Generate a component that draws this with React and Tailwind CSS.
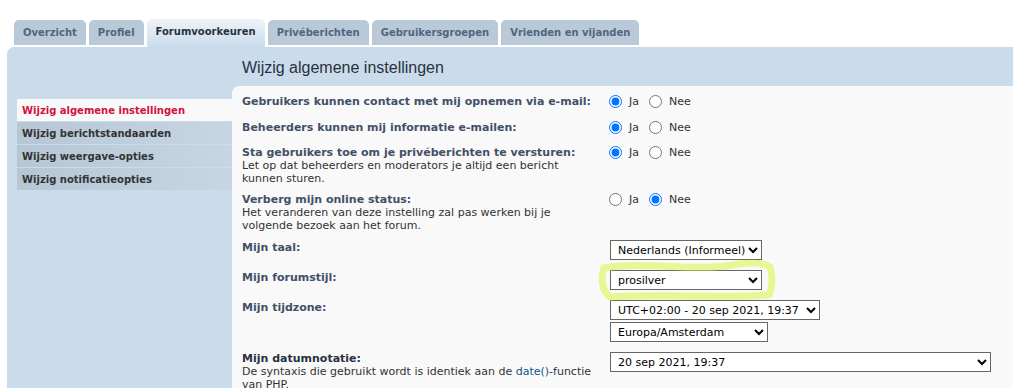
import React from "react";

const tabs = [
  { label: "Overzicht" },
  { label: "Profiel" },
  { label: "Forumvoorkeuren", active: true },
  { label: "Privéberichten" },
  { label: "Gebruikersgroepen" },
  { label: "Vrienden en vijanden" },
];

const menu = [
  { label: "Wijzig algemene instellingen", active: true },
  { label: "Wijzig berichtstandaarden" },
  { label: "Wijzig weergave-opties" },
  { label: "Wijzig notificatieopties" },
];

function Radios({ name, yes }) {
  return (
    <div className="flex items-center h-[13px]">
      <input type="radio" name={name} defaultChecked={yes} className="m-0 w-[13px] h-[13px]" />
      <span className="ml-[7px] text-[#333]">Ja</span>
      <input type="radio" name={name} defaultChecked={!yes} className="m-0 ml-[10px] w-[13px] h-[13px]" />
      <span className="ml-[7px] text-[#333]">Nee</span>
    </div>
  );
}

function Sel({ w, children }) {
  return (
    <select
      className={`${w} h-[20px] ml-[1px] border border-[#666] bg-white text-black pl-[3px] text-[11px] font-['DejaVu_Sans',sans-serif]`}
      defaultValue="a"
    >
      <option value="a">{children}</option>
    </select>
  );
}

export default function App() {
  return (
    <div className="relative w-[1013px] h-[388px] overflow-hidden bg-white font-['DejaVu_Sans',sans-serif] text-[11px] leading-[13px]">
      {/* Tabs */}
      <div className="h-[47px] flex items-end pl-[14px] gap-[3px]">
        {tabs.map((t) =>
          t.active ? (
            <div
              key={t.label}
              className="h-[28px] px-[9px] flex items-center rounded-t-[5px] bg-gradient-to-b from-[#eef4f9] to-[#cadceb] text-[#28313f] font-bold text-[10px] pb-[3px]"
            >
              {t.label}
            </div>
          ) : (
            <div
              key={t.label}
              className="h-[25px] mb-[2px] px-[9px] flex items-center rounded-t-[5px] bg-[#b9c9d7] text-[#536482] font-bold text-[10px]"
            >
              {t.label}
            </div>
          )
        )}
      </div>

      {/* Panel */}
      <div className="ml-[7px] h-[341px] bg-[#cadceb] rounded-tl-[7px] flex overflow-hidden">
        {/* Left menu */}
        <div className="w-[225px] shrink-0 pl-[10px] pt-[52px] flex flex-col gap-[1px]">
          {menu.map((m) =>
            m.active ? (
              <div key={m.label} className="w-[215px] h-[22px] px-[5px] flex items-center bg-[#f9f9f9] text-[#d31141] font-bold text-[10px]">
                {m.label}
              </div>
            ) : (
              <div
                key={m.label}
                className="w-[215px] h-[22px] px-[5px] flex items-center bg-gradient-to-r from-[#b6c6d5] to-[#c6d6e4] text-[#333] font-bold text-[10px]"
              >
                {m.label}
              </div>
            )
          )}
        </div>

        {/* Main */}
        <div className="flex-1 flex flex-col min-h-0">
          <div className="h-[39px] shrink-0 pl-[10px] pt-[12px] font-['Liberation_Sans',Arial,sans-serif] text-[16px] leading-[18px] text-[#28313f]">
            Wijzig algemene instellingen
          </div>
          <div className="flex-1 min-h-0 bg-[#f9f9f9] rounded-tl-[7px] pl-[10px] pt-[9px]">
            {/* Row 1 */}
            <div className="flex min-h-[18px] mb-[8px]">
              <div className="w-[367px] pr-[11px] shrink-0">
                <div className="font-bold text-[#425067]">Gebruikers kunnen contact met mij opnemen via e-mail:</div>
              </div>
              <Radios name="r1" yes />
            </div>
            {/* Row 2 */}
            <div className="flex min-h-[18px] mb-[7px]">
              <div className="w-[367px] pr-[11px] shrink-0">
                <div className="font-bold text-[#425067]">Beheerders kunnen mij informatie e-mailen:</div>
              </div>
              <Radios name="r2" yes />
            </div>
            {/* Row 3 */}
            <div className="flex min-h-[18px] mb-[8px]">
              <div className="w-[367px] pr-[11px] shrink-0">
                <div className="font-bold text-[#425067]">Sta gebruikers toe om je privéberichten te versturen:</div>
                <div className="text-[#333]">Let op dat beheerders en moderators je altijd een bericht kunnen sturen.</div>
              </div>
              <Radios name="r3" yes />
            </div>
            {/* Row 4 */}
            <div className="flex min-h-[18px] mb-[8px]">
              <div className="w-[367px] pr-[11px] shrink-0">
                <div className="font-bold text-[#425067]">Verberg mijn online status:</div>
                <div className="text-[#333]">Het veranderen van deze instelling zal pas werken bij je volgende bezoek aan het forum.</div>
              </div>
              <Radios name="r4" yes={false} />
            </div>
            {/* Row 5 */}
            <div className="flex mb-[10px]">
              <div className="w-[367px] pr-[11px] shrink-0 pt-[1px]">
                <div className="font-bold text-[#425067]">Mijn taal:</div>
              </div>
              <Sel w="w-[152px]">Nederlands (Informeel)</Sel>
            </div>
            {/* Row 6 */}
            <div className="flex mb-[10px]">
              <div className="w-[367px] pr-[11px] shrink-0 pt-[1px]">
                <div className="font-bold text-[#425067]">Mijn forumstijl:</div>
              </div>
              <Sel w="w-[152px]">prosilver</Sel>
            </div>
            {/* Row 7 */}
            <div className="flex mb-[10px]">
              <div className="w-[367px] pr-[11px] shrink-0 pt-[1px]">
                <div className="font-bold text-[#425067]">Mijn tijdzone:</div>
              </div>
              <div className="flex flex-col gap-[2px]">
                <Sel w="w-[210px]">UTC+02:00 - 20 sep 2021, 19:37</Sel>
                <Sel w="w-[158px]">Europa/Amsterdam</Sel>
              </div>
            </div>
            {/* Row 8 */}
            <div className="flex">
              <div className="w-[367px] pr-[11px] shrink-0">
                <div className="font-bold text-[#28313f]">Mijn datumnotatie:</div>
                <div className="text-[#333]">
                  De syntaxis die gebruikt wordt is identiek aan de <span className="text-[#105289]">date()</span>-functie van PHP.
                </div>
              </div>
              <Sel w="w-[381px]">20 sep 2021, 19:37</Sel>
            </div>
          </div>
        </div>
      </div>

      {/* Hand-drawn highlight */}
      <svg className="absolute left-0 top-0 pointer-events-none" width="1013" height="388" viewBox="0 0 1013 388">
        <path
          d="M604,268 C 640,261 690,271 725,266 C 748,262 764,262 770,267 C 773,276 772,289 769,295 C 720,299 665,293 610,297 C 603,292 600,280 604,268 Z"
          fill="none"
          stroke="rgba(222,244,80,0.6)"
          strokeWidth="7"
          strokeLinecap="round"
          strokeLinejoin="round"
        />
      </svg>
    </div>
  );
}
